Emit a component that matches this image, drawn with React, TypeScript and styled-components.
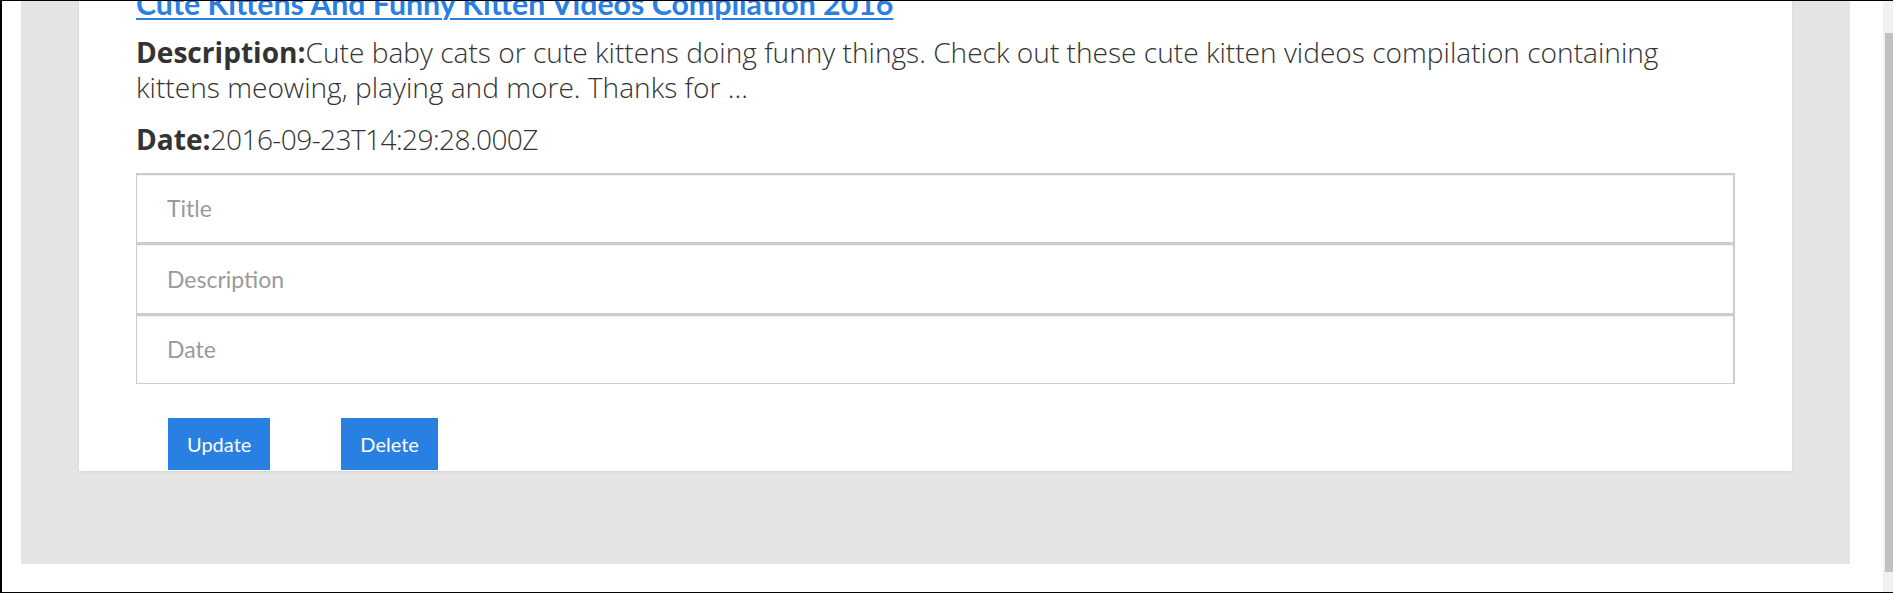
import React from "react";
import styled, { createGlobalStyle } from "styled-components";

const Global = createGlobalStyle`
  html, body { margin: 0; padding: 0; background: #fff; overflow: hidden; }
  body { font-family: "Open Sans", "Liberation Sans", sans-serif; }
  * { box-sizing: border-box; }
`;

const Frame = styled.div`
  display: flex;
  height: 593px;
  width: 1893px;
  border-top: 1px solid #000;
  border-bottom: 1px solid #000;
  border-left: 2px solid #000;
`;

const Viewport = styled.div`
  flex: 1;
  display: flex;
  flex-direction: column;
  justify-content: flex-end;
  overflow: hidden;
  padding: 0 33px 28px 19px;
  background: #fff;
`;

const Panel = styled.div`
  background: #e4e4e4;
  padding: 0 58px 93px 58px;
  display: flex;
  flex-direction: column;
`;

const Card = styled.div`
  background: #fff;
  padding: 0 57px 1px 57px;
  display: flex;
  flex-direction: column;
  box-shadow: 0 1px 2px rgba(0, 0, 0, 0.08);
`;

const TitleLink = styled.a`
  font-family: "Lato", sans-serif;
  font-weight: 700;
  font-size: 30.3px;
  line-height: 32px;
  color: #2980e3;
  text-decoration: underline;
  text-decoration-thickness: 2px;
  text-underline-offset: 3px;
  align-self: flex-start;
`;

const Field = styled.p<{ $gap: number; $tracking?: number }>`
  margin: ${(p) => p.$gap}px 0 0 0;
  padding-right: 70px;
  font-family: "Open Sans", sans-serif;
  font-size: 28.1px;
  line-height: 35px;
  font-weight: 300;
  letter-spacing: ${(p) => p.$tracking ?? 0}px;
  color: #333;
`;

const Label = styled.strong`
  font-weight: 700;
  color: #333;
  letter-spacing: 0;
`;

const Form = styled.div`
  display: flex;
  flex-direction: column;
  margin-top: 16px;
`;

const Input = styled.input`
  height: 70.5px;
  width: 100%;
  border: 1px solid #ccc;
  border-top-width: 2px;
  border-right-width: 2px;
  box-shadow: inset 0 1px 1px rgba(0, 0, 0, 0.06);
  padding: 0 30px;
  font-family: "Lato", sans-serif;
  font-size: 23px;
  color: #333;
  background: #fff;
  outline: none;
  &::placeholder {
    color: #9a9a9a;
  }
`;

const Buttons = styled.div`
  display: flex;
  gap: 71px;
  margin: 34px 0 0 32px;
`;

const Button = styled.button`
  height: 52px;
  padding: 0 19px;
  border: none;
  background: #2881e2;
  color: #fff;
  font-family: "Lato", sans-serif;
  font-size: 20px;
  cursor: pointer;
`;

const Scrollbar = styled.div`
  width: 10px;
  background: #f1f1f1;
  display: flex;
  flex-direction: column;
  padding: 32px 0 20px 2px;
`;

const Thumb = styled.div`
  flex: 1;
  background: #c1c1c1;
`;

export default function App() {
  return (
    <>
      <Global />
      <Frame>
        <Viewport>
          <Panel>
            <Card>
              <TitleLink href="#">
                Cute Kittens And Funny Kitten Videos Compilation 2016
              </TitleLink>
              <Field $gap={16}>
                <Label>Description:</Label>Cute baby cats or cute kittens
                doing funny things. Check out these cute kitten videos
                compilation containing kittens meowing, playing and more.
                Thanks for ...
              </Field>
              <Field $gap={17} $tracking={-0.6}>
                <Label>Date:</Label>2016-09-23T14:29:28.000Z
              </Field>
              <Form>
                <Input placeholder="Title" />
                <Input placeholder="Description" />
                <Input placeholder="Date" />
              </Form>
              <Buttons>
                <Button>Update</Button>
                <Button>Delete</Button>
              </Buttons>
            </Card>
          </Panel>
        </Viewport>
        <Scrollbar>
          <Thumb />
        </Scrollbar>
      </Frame>
    </>
  );
}
